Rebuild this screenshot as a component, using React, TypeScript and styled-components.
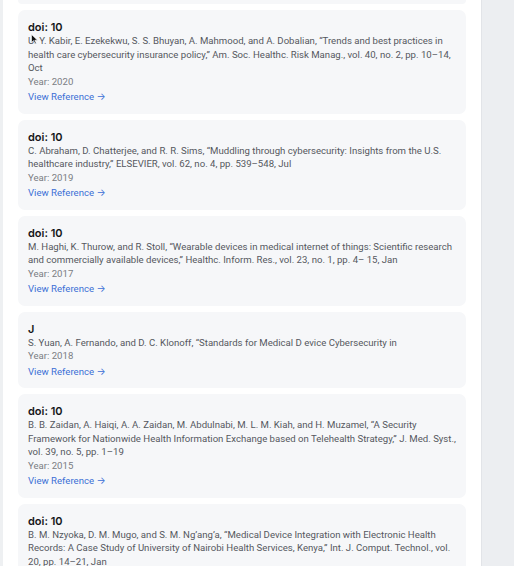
import React from "react";
import styled, { createGlobalStyle } from "styled-components";

const GlobalStyle = createGlobalStyle`
  html, body {
    margin: 0;
    padding: 0;
    height: 566px;
    overflow: hidden;
    background: #eef0f2;
  }
  * { box-sizing: border-box; }
`;

const Page = styled.div`
  display: flex;
  height: 566px;
  overflow: hidden;
  font-family: Roboto, Inter, "Liberation Sans", Arial, sans-serif;
  -webkit-font-smoothing: antialiased;
`;

const Panel = styled.main`
  position: relative;
  margin-left: 3px;
  width: 479px;
  background: #ffffff;
  border-right: 1px solid #e2e4e8;
  padding: 0 15px 0 15px;
  overflow: hidden;
`;

const Gutter = styled.div`
  flex: 1;
  background: #eceef1;
`;

const List = styled.div`
  display: flex;
  flex-direction: column;
  gap: 6px;
`;

const CardTail = styled.div`
  height: 4px;
  background: #f6f7f9;
  border-radius: 0 0 7px 7px;
`;

const Card = styled.article`
  background: #f6f7f9;
  border-radius: 7px;
  padding: 10px 10px 10px 10px;
  display: flex;
  flex-direction: column;
`;

const Title = styled.h3`
  margin: 0;
  font-family: Inter, "Liberation Sans", Arial, sans-serif;
  font-size: 11px;
  line-height: 14px;
  font-weight: 600;
  color: #151618;
`;

const Citation = styled.p`
  margin: 0;
  font-size: 9.6px;
  line-height: 13.5px;
  color: #55585e;
`;

const Year = styled.div`
  font-size: 9.6px;
  line-height: 13.5px;
  color: #7a7d83;
`;

const Link = styled.a`
  margin-top: 2px;
  font-size: 9.6px;
  line-height: 13.5px;
  color: #3b6fd6;
  text-decoration: none;
  cursor: pointer;
`;

const Cursor = styled.svg`
  position: absolute;
  left: 28px;
  top: 34px;
  width: 7px;
  height: 10px;
  pointer-events: none;
`;

type Ref = { title: string; citation: string; year: number };

const refs: Ref[] = [
  {
    title: "doi: 10",
    citation:
      "U. Y. Kabir, E. Ezekekwu, S. S. Bhuyan, A. Mahmood, and A. Dobalian, \u201cTrends and best practices in health care cybersecurity insurance policy,\u201d Am. Soc. Healthc. Risk Manag., vol. 40, no. 2, pp. 10\u201314, Oct",
    year: 2020,
  },
  {
    title: "doi: 10",
    citation:
      "C. Abraham, D. Chatterjee, and R. R. Sims, \u201cMuddling through cybersecurity: Insights from the U.S. healthcare industry,\u201d ELSEVIER, vol. 62, no. 4, pp. 539\u2013548, Jul",
    year: 2019,
  },
  {
    title: "doi: 10",
    citation:
      "M. Haghi, K. Thurow, and R. Stoll, \u201cWearable devices in medical internet of things: Scientific research and commercially available devices,\u201d Healthc. Inform. Res., vol. 23, no. 1, pp. 4\u2013 15, Jan",
    year: 2017,
  },
  {
    title: "J",
    citation:
      "S. Yuan, A. Fernando, and D. C. Klonoff, \u201cStandards for Medical D evice Cybersecurity in",
    year: 2018,
  },
  {
    title: "doi: 10",
    citation:
      "B. B. Zaidan, A. Haiqi, A. A. Zaidan, M. Abdulnabi, M. L. M. Kiah, and H. Muzamel, \u201cA Security Framework for Nationwide Health Information Exchange based on Telehealth Strategy,\u201d J. Med. Syst., vol. 39, no. 5, pp. 1\u201319",
    year: 2015,
  },
  {
    title: "doi: 10",
    citation:
      "B. M. Nzyoka, D. M. Mugo, and S. M. Ng\u2019ang\u2019a, \u201cMedical Device Integration with Electronic Health Records: A Case Study of University of Nairobi Health Services, Kenya,\u201d Int. J. Comput. Technol., vol. 20, pp. 14\u201321, Jan",
    year: 2014,
  },
];

export default function App() {
  return (
    <>
      <GlobalStyle />
      <Page>
        <Panel>
          <List>
            <CardTail />
            {refs.map((r, i) => (
              <Card key={i}>
                <Title>{r.title}</Title>
                <Citation>{r.citation}</Citation>
                <Year>Year: {r.year}</Year>
                <Link>View Reference →</Link>
              </Card>
            ))}
          </List>
          <Cursor viewBox="0 0 7 10">
            <path d="M0.5 0.5 L0.5 8.5 L2.5 6.6 L4 9.5 L5.2 9 L3.8 6.2 L6.5 6.2 Z" fill="#111" stroke="#fff" strokeWidth="0.6" />
          </Cursor>
        </Panel>
        <Gutter />
      </Page>
    </>
  );
}
